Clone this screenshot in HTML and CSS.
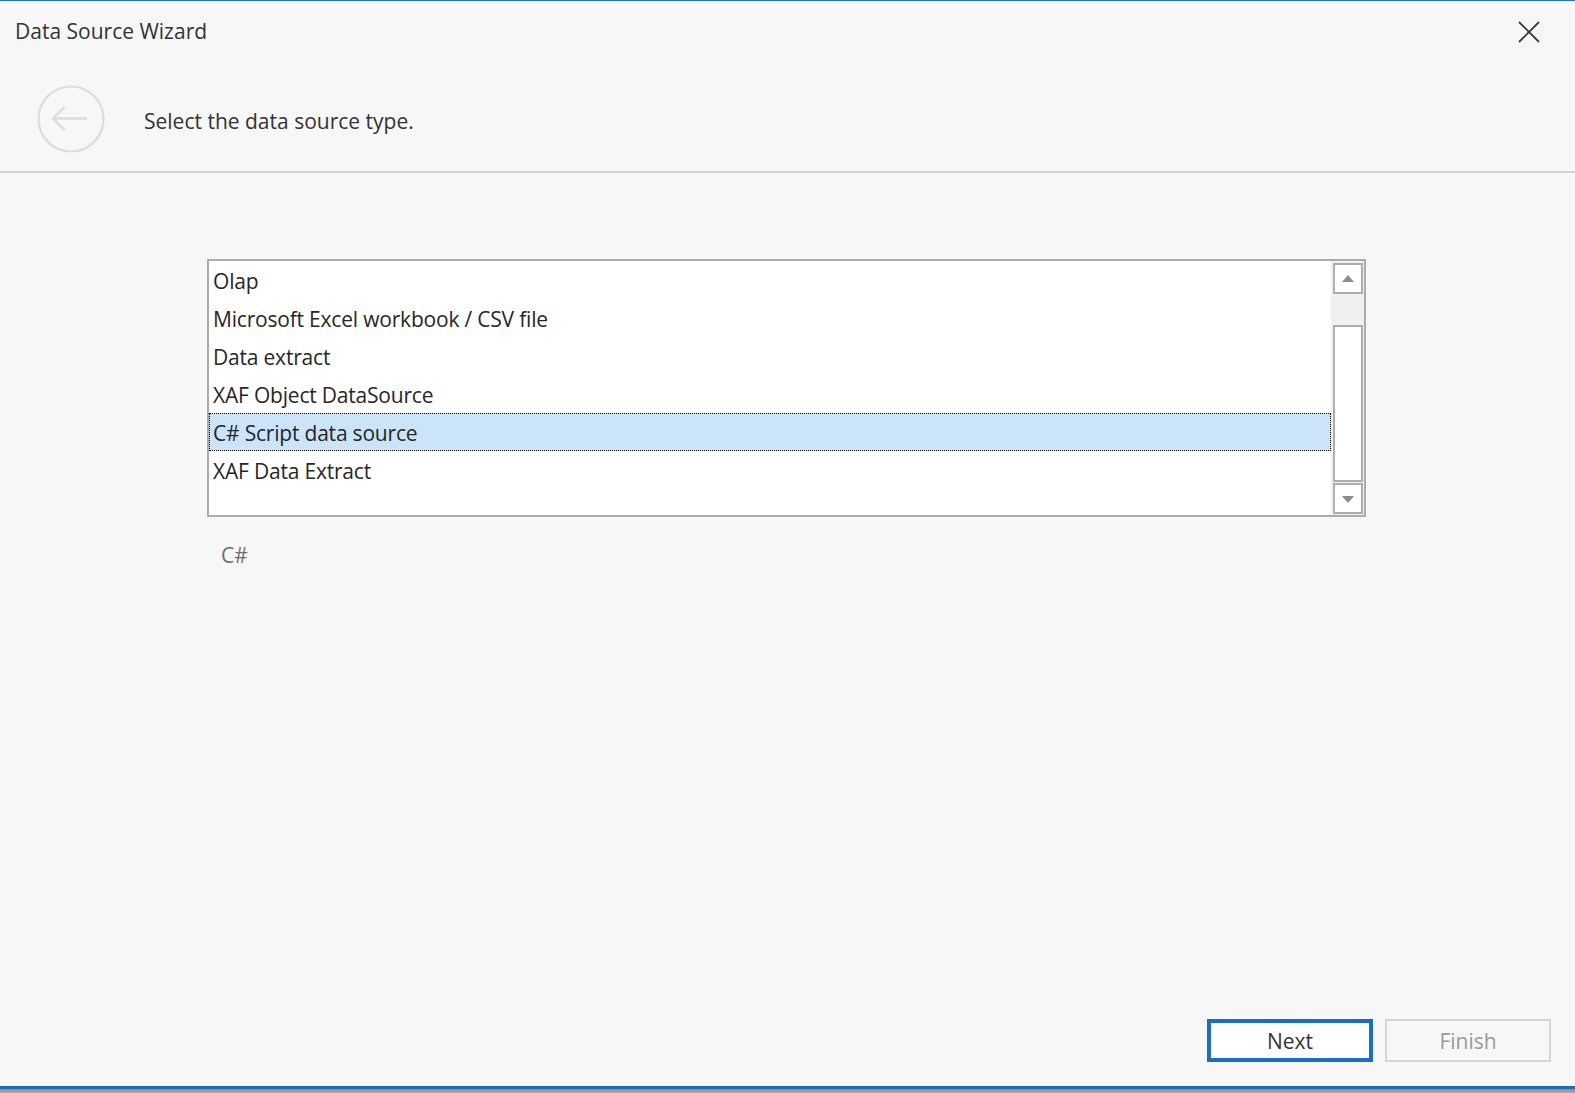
FILE: index.html
```html
<!DOCTYPE html>
<html>
<head>
<meta charset="utf-8">
<title>Data Source Wizard</title>
<link rel="stylesheet" href="styles.css">
</head>
<body>
<div class="frame">
  <div class="window">
    <div class="titlebar">
      <span class="title">Data Source Wizard</span>
      <span class="close">
        <svg width="22" height="22" viewBox="0 0 22 22"><path d="M1 1L21 21M21 1L1 21" stroke="#3c3c3c" stroke-width="1.8" fill="none"/></svg>
      </span>
    </div>
    <div class="header">
      <span class="back">
        <svg width="68" height="68" viewBox="0 0 68 68">
          <circle cx="34" cy="34" r="32.5" stroke="#dcdcdc" stroke-width="2.2" fill="none"/>
          <path d="M16 33.5H50M27.5 22L16 33.5L27.5 45" stroke="#dcdcdc" stroke-width="2.4" fill="none"/>
        </svg>
      </span>
      <span class="caption">Select the data source type.</span>
    </div>
    <div class="separator"></div>
    <div class="content">
      <div class="listbox">
        <ul class="items">
          <li>Olap</li>
          <li>Microsoft Excel workbook / CSV file</li>
          <li>Data extract</li>
          <li>XAF Object DataSource</li>
          <li class="selected">C# Script data source</li>
          <li>XAF Data Extract</li>
        </ul>
        <div class="scrollbar">
          <div class="sb-btn">
            <svg width="14" height="8" viewBox="0 0 14 8"><path d="M7 0L13 7H1Z" fill="#8c8c8c"/></svg>
          </div>
          <div class="sb-track"></div>
          <div class="sb-thumb"></div>
          <div class="sb-btn sb-down">
            <svg width="14" height="8" viewBox="0 0 14 8"><path d="M1 1H13L7 8Z" fill="#8c8c8c"/></svg>
          </div>
        </div>
      </div>
      <div class="desc">C#</div>
    </div>
    <div class="footer">
      <button class="btn btn-primary">Next</button>
      <button class="btn btn-disabled">Finish</button>
    </div>
  </div>
  <div class="edge"></div>
</div>
</body>
</html>
```
FILE: styles.css
```css
html, body {
  margin: 0;
  padding: 0;
}
body {
  background: #f7f7f7;
  font-family: "Open Sans", "Noto Sans", sans-serif;
  font-size: 21px;
  color: #333;
}
.frame {
  height: 1093px;
  display: flex;
  flex-direction: column;
}
.window {
  flex: 1;
  display: flex;
  flex-direction: column;
  background: #f7f7f7;
  border-top: 1px solid #1f6fc1;
  border-bottom: 3px solid #1b6cc0;
}
.edge {
  height: 4px;
  background: linear-gradient(#8e8e8e, #adadad);
}
.titlebar {
  height: 61px;
  display: flex;
  align-items: center;
  justify-content: space-between;
  padding: 0 35px 0 15px;
}
.title {
  color: #333;
  line-height: 28px;
  margin-bottom: 2px;
}
.close {
  display: flex;
  width: 22px;
  height: 22px;
}
.header {
  display: flex;
  align-items: center;
  padding: 23px 0 18px 37px;
}
.back {
  display: flex;
  width: 68px;
  height: 68px;
}
.caption {
  margin-left: 39px;
  margin-top: 4px;
  color: #333;
  line-height: 28px;
}
.separator {
  height: 2px;
  background: #d3d3d3;
}
.content {
  flex: 1;
  padding: 86px 0 0 207px;
}
.listbox {
  box-sizing: border-box;
  width: 1159px;
  height: 258px;
  border: 2px solid #ababab;
  background: #fff;
  display: flex;
}
.items {
  flex: 1;
  list-style: none;
  margin: 0;
  padding: 0;
}
.items li {
  height: 38px;
  box-sizing: border-box;
  border: 1px solid transparent;
  padding: 2px 0 0 3px;
  line-height: 34px;
  color: #262626;
  white-space: nowrap;
  letter-spacing: -0.2px;
}
.items li.selected {
  background: #cce4f7;
  border: 1px dotted #000;
}
.scrollbar {
  width: 33px;
  box-sizing: border-box;
  background: #f0f0f0;
  padding: 2px 1px 1px 2px;
  display: flex;
  flex-direction: column;
}
.sb-btn {
  height: 31px;
  box-sizing: border-box;
  border: 2px solid #adadad;
  background: #fff;
  display: flex;
  align-items: center;
  justify-content: center;
}
.sb-down {
  height: 31px;
}
.sb-track {
  height: 31px;
}
.sb-thumb {
  height: 157px;
  margin-bottom: 1px;
  box-sizing: border-box;
  border: 2px solid #adadad;
  background: #fff;
}
.desc {
  margin: 24px 0 0 14px;
  color: #6e6e6e;
  line-height: 28px;
}
.footer {
  display: flex;
  justify-content: flex-end;
  gap: 12px;
  padding: 0 24px 24px 0;
}
.btn {
  width: 166px;
  height: 43px;
  box-sizing: border-box;
  font-family: inherit;
  font-size: 21px;
  padding: 0;
}
.btn-primary {
  border: 4px solid #1b6ec2;
  background: #fff;
  color: #333;
}
.btn-disabled {
  border: 2px solid #d5d5d5;
  background: #f7f7f7;
  color: #9a9a9a;
}
```
